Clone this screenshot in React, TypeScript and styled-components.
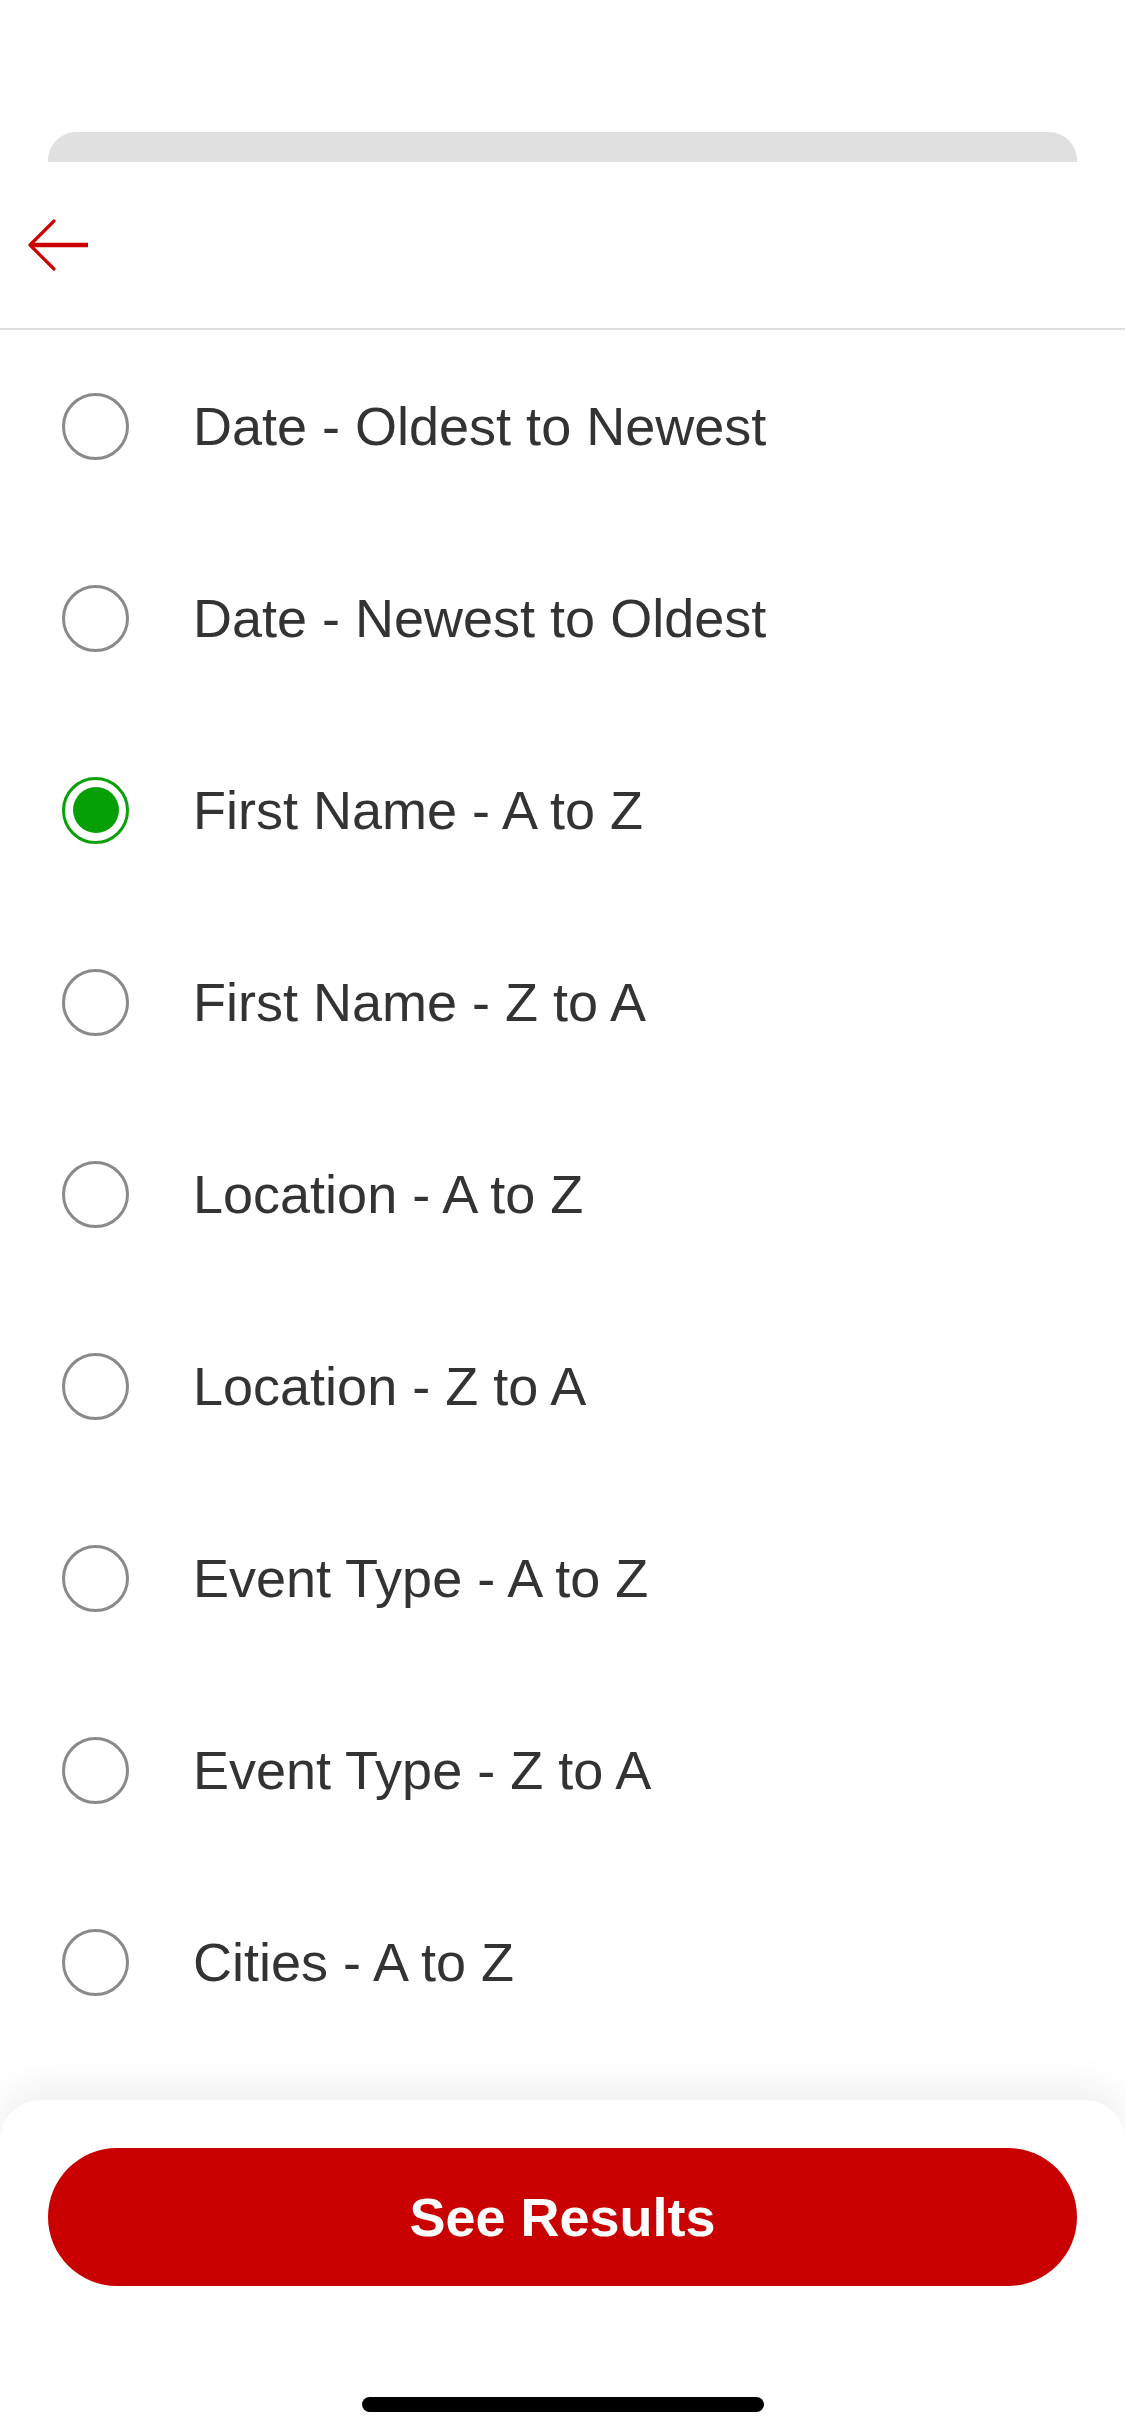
import React, { useState } from "react";
import styled, { createGlobalStyle } from "styled-components";

const GlobalStyle = createGlobalStyle`
  html, body {
    margin: 0;
    padding: 0;
    background: #ffffff;
  }
  * { box-sizing: border-box; }
`;

const Screen = styled.div`
  width: 1125px;
  height: 2436px;
  display: flex;
  flex-direction: column;
  background: #ffffff;
  font-family: "Liberation Sans", Arial, Helvetica, sans-serif;
  overflow: hidden;
`;

const StatusSpace = styled.div`
  height: 132px;
  flex-shrink: 0;
`;

const PeekCard = styled.div`
  height: 30px;
  margin: 0 48px;
  background: #e0e0e0;
  border-radius: 28px 28px 0 0;
  flex-shrink: 0;
`;

const Header = styled.div`
  height: 168px;
  display: flex;
  align-items: center;
  padding-left: 27px;
  border-bottom: 2px solid #dddddd;
  flex-shrink: 0;
`;

const BackButton = styled.button`
  border: none;
  background: none;
  padding: 0;
  display: flex;
  cursor: pointer;
`;

const List = styled.div`
  display: flex;
  flex-direction: column;
`;

const Row = styled.label`
  height: 192px;
  display: flex;
  align-items: center;
  padding-left: 62px;
  gap: 64px;
  cursor: pointer;
`;

const Radio = styled.span<{ $checked: boolean }>`
  width: 67px;
  height: 67px;
  border-radius: 50%;
  border: 3px solid ${(p) => (p.$checked ? "#0aa00a" : "#8a8a8a")};
  display: flex;
  align-items: center;
  justify-content: center;
  flex-shrink: 0;
`;

const Dot = styled.span`
  width: 46px;
  height: 46px;
  border-radius: 50%;
  background: #06a006;
`;

const Label = styled.span`
  font-size: 54px;
  color: #333333;
  line-height: 1;
`;

const Footer = styled.div`
  margin-top: auto;
  height: 336px;
  background: #ffffff;
  border-radius: 40px 40px 0 0;
  box-shadow: 0 -12px 40px rgba(0, 0, 0, 0.07);
  display: flex;
  flex-direction: column;
  align-items: center;
  padding: 48px 48px 24px;
  flex-shrink: 0;
`;

const ResultsButton = styled.button`
  width: 100%;
  height: 138px;
  border: none;
  border-radius: 69px;
  background: #c80000;
  color: #ffffff;
  font-family: "Liberation Sans", Arial, Helvetica, sans-serif;
  font-weight: 700;
  font-size: 54px;
  cursor: pointer;
`;

const HomeIndicator = styled.div`
  margin-top: auto;
  width: 402px;
  height: 15px;
  border-radius: 8px;
  background: #000000;
`;

const options = [
  "Date - Oldest to Newest",
  "Date - Newest to Oldest",
  "First Name - A to Z",
  "First Name - Z to A",
  "Location - A to Z",
  "Location - Z to A",
  "Event Type - A to Z",
  "Event Type - Z to A",
  "Cities - A to Z",
];

export default function App() {
  const [selected, setSelected] = useState(2);
  return (
    <>
      <GlobalStyle />
      <Screen>
        <StatusSpace />
        <PeekCard />
        <Header>
          <BackButton aria-label="Back">
            <svg width="62" height="52" viewBox="0 0 62 52" fill="none">
              <path d="M3 26 H61" stroke="#cc0000" strokeWidth="4.5" />
              <path
                d="M27 2 L3 26 L27 50"
                stroke="#cc0000"
                strokeWidth="3.2"
                strokeLinecap="round"
                strokeLinejoin="round"
              />
            </svg>
          </BackButton>
        </Header>
        <List>
          {options.map((o, i) => (
            <Row key={o} onClick={() => setSelected(i)}>
              <Radio $checked={selected === i}>{selected === i && <Dot />}</Radio>
              <Label>{o}</Label>
            </Row>
          ))}
        </List>
        <Footer>
          <ResultsButton>See Results</ResultsButton>
          <HomeIndicator />
        </Footer>
      </Screen>
    </>
  );
}
